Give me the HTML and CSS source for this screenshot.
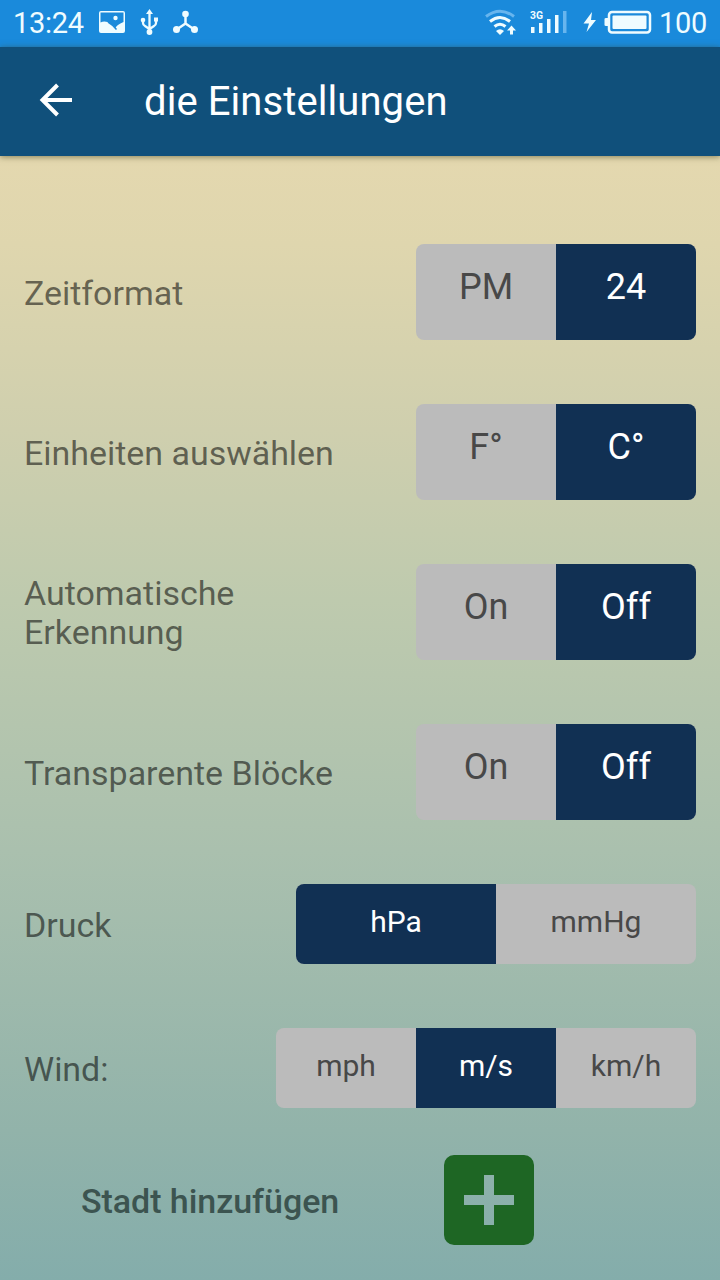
FILE: index.html
```html
<!DOCTYPE html>
<html lang="de">
<head>
<meta charset="utf-8">
<title>die Einstellungen</title>
<link rel="stylesheet" href="styles.css">
</head>
<body>
<div class="screen">
  <div class="status">
    <span class="clock">13:24</span>
    <svg class="status-icons" width="104" height="46" viewBox="0 0 104 46">
      <path fill="#effcff" fill-rule="evenodd" d="M4 11h22q2 0 2 2v18q0 2-2 2H4q-2 0-2-2V13q0-2 2-2zm-.5 1.500v10q3-1.500 7-.5 4 1.500 8 6 1-3 8-6V12.500z"/>
      <path stroke="#1c8ad9" stroke-width="1.500" fill="none" d="M11 22q4.500 2.500 8.500 7.500"/>
      <circle cx="18.500" cy="18" r="2.200" fill="#effcff"/>
      <path d="M52.500 12v21M46 20v3q0 2 2 3l4.500 3 4.500-3q2-1 2-3v-4" stroke="#effcff" stroke-width="2.300" fill="none"/>
      <path fill="#effcff" d="M52.500 9l3.500 5h-7zM57 17.500h4v4h-4z"/>
      <circle cx="46" cy="20" r="2.300" fill="#effcff"/><circle cx="52.500" cy="32" r="2.900" fill="#effcff"/>
      <path d="M88.500 14v11M88.500 23.500L79 30M88.500 23.500L98 30" stroke="#effcff" stroke-width="2.500" fill="none"/>
      <circle cx="88.500" cy="14" r="3.300" fill="#effcff"/><circle cx="79.500" cy="29.500" r="3.500" fill="#effcff"/><circle cx="97.500" cy="29.500" r="3.500" fill="#effcff"/>
    </svg>
    <svg class="status-right" width="170" height="46" viewBox="484 0 170 46">
      <g fill="none" stroke="#effcff" stroke-width="3">
        <path stroke="#67b5ee" d="M486 16.500q14-10.500 28 0"/>
        <path d="M490 21.500q10-8 20 0M494.500 26.500q5.500-4.500 11 0"/>
      </g>
      <path fill="#effcff" d="M496 31q4-3.500 8 0l-4 4zM511.500 25.500l4.500 5h-3v4h-3v-4h-3z"/>
      <text class="net" x="530" y="18.500" textLength="13" lengthAdjust="spacingAndGlyphs">3G</text>
      <path fill="#effcff" d="M531 27h3.500v6H531zM539 23h3.500v10H539zM547 19h3.500v14H547zM555 15h3.500v18H555z"/>
      <path fill="#67b5ee" d="M563 11h3.500v22H563z"/>
      <path fill="#effcff" d="M592 12l-8.500 11.500h5.500L586.500 32 596 20h-5z"/>
      <rect x="609" y="12" width="41" height="20.500" rx="3" fill="none" stroke="#effcff" stroke-width="2.500"/>
      <rect x="612.500" y="15.500" width="34" height="13.500" rx="1" fill="#effcff"/>
      <path fill="#effcff" d="M608 18h-2q-1.500 0-1.500 1v6q0 1 1.500 1h2z"/>
    </svg>
    <span class="percent">100</span>
  </div>
  <header class="bar">
    <svg class="back" width="34" height="34" viewBox="0 0 34 34">
      <path d="M33 17H3.500M18.500 2L3.500 17l15 15" fill="none" stroke="#fff" stroke-width="4"/>
    </svg>
    <h1 class="title">die Einstellungen</h1>
  </header>
  <main class="settings">
    <div class="row">
      <span class="label">Zeitformat</span>
      <div class="switch"><span class="opt">PM</span><span class="opt on">24</span></div>
    </div>
    <div class="row">
      <span class="label">Einheiten auswählen</span>
      <div class="switch"><span class="opt">F°</span><span class="opt on">C°</span></div>
    </div>
    <div class="row">
      <span class="label">Automatische<br>Erkennung</span>
      <div class="switch"><span class="opt">On</span><span class="opt on">Off</span></div>
    </div>
    <div class="row">
      <span class="label">Transparente Blöcke</span>
      <div class="switch"><span class="opt">On</span><span class="opt on">Off</span></div>
    </div>
    <div class="row low">
      <span class="label">Druck</span>
      <div class="switch wide"><span class="opt on">hPa</span><span class="opt">mmHg</span></div>
    </div>
    <div class="row low">
      <span class="label">Wind:</span>
      <div class="switch"><span class="opt">mph</span><span class="opt on">m/s</span><span class="opt">km/h</span></div>
    </div>
    <div class="add">
      <span class="add-label">Stadt hinzufügen</span>
      <svg class="plus" width="90" height="90" viewBox="0 0 90 90">
        <path fill="#1e6624" fill-rule="evenodd" d="M10 0h70a10 10 0 0 1 10 10v70a10 10 0 0 1-10 10H10A10 10 0 0 1 0 80V10A10 10 0 0 1 10 0zM40 20v20H20v10h20v20h10V50h20V40H50V20z"/>
      </svg>
    </div>
  </main>
</div>
</body>
</html>
```
FILE: styles.css
```css
body {
  margin: 0;
  font-family: Roboto, "Liberation Sans", sans-serif;
}
.screen {
  width: 720px;
  height: 1280px;
  overflow: hidden;
  display: flex;
  flex-direction: column;
  background: linear-gradient(#e4d8af 156px, #dfd6ae 244px, #cfcfae 430px, #becaae 600px, #aac0ae 850px, #92b3aa 1130px, #84adab 1280px);
}
.status {
  height: 47px;
  flex: none;
  box-sizing: border-box;
  display: flex;
  align-items: center;
  padding: 0 14px 2px 13px;
  background: #1a8adb;
  color: #effcff;
}
.clock, .percent {
  font-size: 29px;
  letter-spacing: -0.3px;
  line-height: 46px;
}
.clock { width: 84px; }
.status-right { margin-left: auto; }
.percent {
  width: 47px;
  margin-left: 5px;
}
.net {
  font-size: 11px;
  font-weight: 700;
  fill: #effcff;
}
.bar {
  height: 109px;
  flex: none;
  display: flex;
  align-items: center;
  background: #10507b;
  box-shadow: 0 1px 6px rgba(60, 60, 20, 0.55);
}
.back {
  margin: 0 0 3px 39px;
}
.title {
  margin: 0 0 0 71px;
  padding-top: 1px;
  font-size: 40px;
  font-weight: 400;
  line-height: 48px;
  letter-spacing: 0.08px;
  color: #fff;
}
.settings {
  display: flex;
  flex-direction: column;
  gap: 64px;
  padding: 88px 24px 0;
}
.row {
  height: 96px;
  display: flex;
  align-items: center;
  justify-content: space-between;
}
.low { height: 80px; }
.label {
  font-size: 34px;
  letter-spacing: -0.03px;
  line-height: 39px;
  padding-top: 2px;
  color: rgba(0, 0, 0, 0.55);
}
.switch {
  display: flex;
  height: 100%;
  border-radius: 8px;
  overflow: hidden;
  background: #bbb;
}
.opt {
  width: 140px;
  display: flex;
  align-items: center;
  justify-content: center;
  padding-bottom: 11px;
  font-size: 36px;
  color: #484848;
}
.low .opt {
  font-size: 30px;
  padding-bottom: 6px;
}
.wide .opt { width: 200px; }
.opt.on {
  background: #113053;
  color: #fff;
}
.add {
  display: flex;
  align-items: center;
  margin-top: -17px;
  padding-left: 57px;
}
.add-label {
  width: 363px;
  padding-top: 2px;
  font-size: 34px;
  font-weight: 500;
  letter-spacing: -0.05px;
  color: #3c5450;
}
```
